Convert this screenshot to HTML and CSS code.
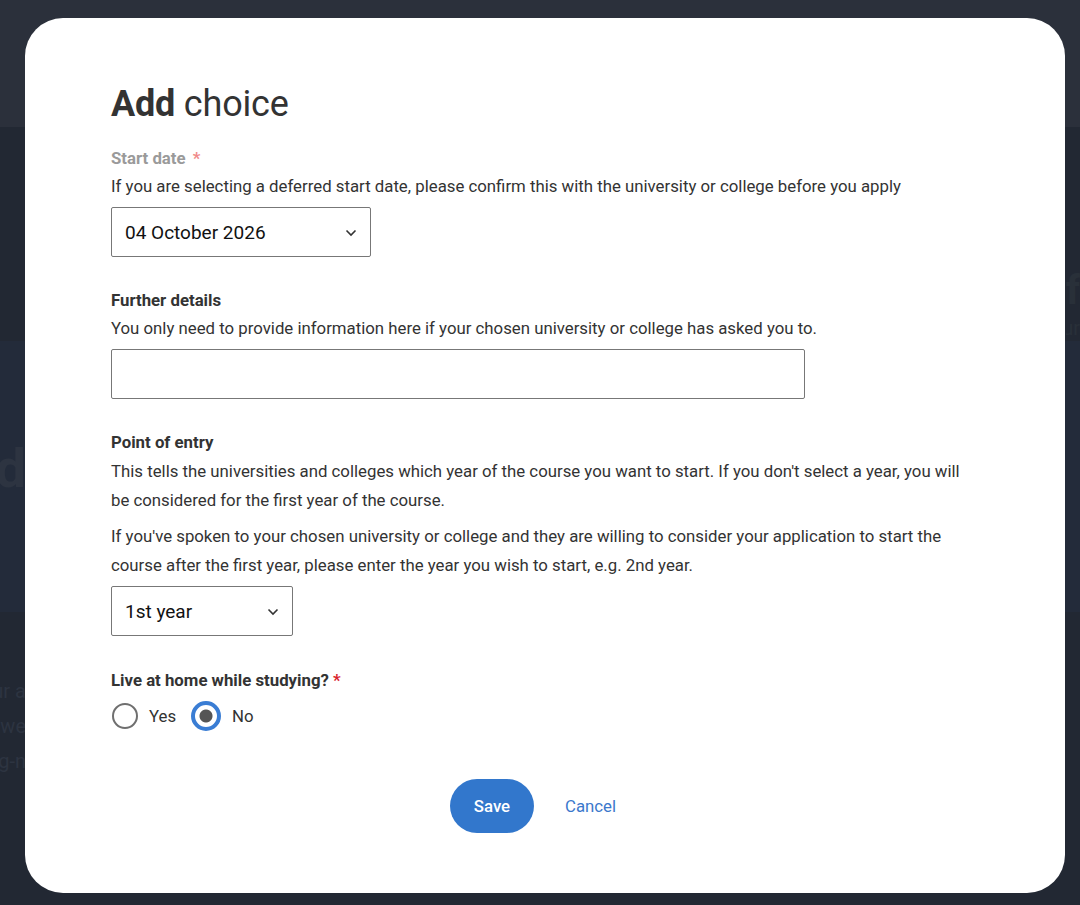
FILE: index.html
```html
<!DOCTYPE html>
<html lang="en">
<head>
<meta charset="utf-8">
<title>Add choice</title>
<link rel="stylesheet" href="styles.css">
</head>
<body>
<div class="page">
  <div class="band band-top"></div>
  <div class="band band-dark1"><div class="peek-right"><span class="big">f</span><span>ur</span></div></div>
  <div class="band band-blue"><div class="peek-left"><span class="big">d</span></div></div>
  <div class="band band-dark2"><div class="peek-left small"><span>ur a</span><span>we</span><span>g-n</span></div></div>
</div>

<div class="modal">
  <h1 class="title"><strong>Add</strong> choice</h1>

  <div class="field">
    <div class="label label-muted">Start date <span class="req-soft">*</span></div>
    <p class="hint">If you are selecting a deferred start date, please confirm this with the university or college before you apply</p>
    <div class="select select-date">
      <span>04 October 2026</span>
      <svg class="chev" width="12" height="8" viewBox="0 0 12 8"><path d="M1.5 1.5 L6 6 L10.5 1.5" fill="none" stroke="#333" stroke-width="1.6"/></svg>
    </div>
  </div>

  <div class="field">
    <div class="label">Further details</div>
    <p class="hint">You only need to provide information here if your chosen university or college has asked you to.</p>
    <div class="textbox"></div>
  </div>

  <div class="field field-entry">
    <div class="label">Point of entry</div>
    <p class="hint tall">This tells the universities and colleges which year of the course you want to start. If you don't select a year, you will be considered for the first year of the course.</p>
    <p class="hint tall second">If you've spoken to your chosen university or college and they are willing to consider your application to start the course after the first year, please enter the year you wish to start, e.g. 2nd year.</p>
    <div class="select select-year">
      <span>1st year</span>
      <svg class="chev" width="12" height="8" viewBox="0 0 12 8"><path d="M1.5 1.5 L6 6 L10.5 1.5" fill="none" stroke="#333" stroke-width="1.6"/></svg>
    </div>
  </div>

  <div class="field">
    <div class="label">Live at home while studying? <span class="req">*</span></div>
    <div class="radios">
      <label class="radio"><span class="dot"></span>Yes</label>
      <label class="radio checked"><span class="dot"></span>No</label>
    </div>
  </div>

  <div class="actions">
    <button class="btn-save">Save</button>
    <a class="btn-cancel">Cancel</a>
  </div>
</div>
</body>
</html>
```

FILE: styles.css
```css
* { box-sizing: border-box; }
html, body { margin: 0; padding: 0; }
body {
  width: 1080px;
  height: 905px;
  overflow: hidden;
  font-family: Roboto, "Liberation Sans", sans-serif;
  background: #222833;
}
.page { display: flex; flex-direction: column; height: 905px; }
.band { position: relative; }
.band-top { height: 127px; background: #2b303b; }
.band-dark1 { height: 214px; background: #222833; }
.band-blue { height: 271px; background: #232b3a; }
.band-dark2 { flex: 1; background: #222833; }

.peek-left {
  width: 26px;
  overflow: hidden;
  display: flex;
  flex-direction: column;
  align-items: flex-end;
  color: #2d3441;
  white-space: nowrap;
}
.band-blue .peek-left { padding-top: 98px; }
.peek-left .big { font-size: 54px; font-weight: 700; line-height: 60px; }
.peek-left.small { padding-top: 62px; font-size: 20px; line-height: 35px; }
.peek-right {
  width: 14px;
  overflow: hidden;
  display: flex;
  flex-direction: column;
  align-items: flex-end;
  padding-top: 142px;
  color: #293039;
  white-space: nowrap;
  position: absolute;
  right: 0;
  top: 0;
}
.peek-right .big { font-size: 40px; font-weight: 700; line-height: 44px; }
.peek-right span { font-size: 20px; line-height: 30px; }

.modal {
  position: absolute;
  left: 25px;
  top: 18px;
  width: 1040px;
  height: 875px;
  background: #fff;
  border-radius: 38px;
  padding: 64px 86px 0 86px;
  color: #333;
}
.title {
  margin: 0 0 22px 0;
  font-size: 36px;
  line-height: 44px;
  font-weight: 400;
  color: #333;
  letter-spacing: -0.2px;
}
.title strong { font-weight: 700; }

.field { margin-bottom: 33px; }
.field-entry { margin-bottom: 34px; }
.label {
  font-size: 16.8px;
  font-weight: 700;
  line-height: 20px;
  color: #333;
}
.label-muted { color: #9a9a9a; }
.req-soft { color: #f08a8a; margin-left: 3px; }
.req { color: #d9242b; }
.hint {
  margin: 7px 0 10px 0;
  font-size: 16.8px;
  line-height: 22px;
  color: #333;
}
.hint.tall { line-height: 29px; margin: 5px 0 7px 0; }
.hint.second { margin-top: 0; margin-bottom: 6px; }

.select {
  height: 50px;
  border: 1px solid #777;
  border-radius: 2px;
  display: flex;
  align-items: center;
  justify-content: space-between;
  padding: 0 13px 0 13px;
  font-size: 19px;
  color: #111;
}
.select-date { width: 260px; }
.select-year { width: 182px; }
.chev { margin-top: 1px; }
.textbox {
  width: 694px;
  height: 50px;
  border: 1px solid #777;
  border-radius: 2px;
}

.radios { display: flex; align-items: center; gap: 15px; margin-top: 11px; }
.radio {
  display: flex;
  align-items: center;
  font-size: 16.8px;
  color: #333;
  gap: 11px;
}
.radio .dot {
  width: 26px;
  height: 26px;
  border-radius: 50%;
  border: 2px solid #6f6f6f;
  display: inline-block;
  margin-left: 1px;
}
.radio.checked .dot {
  width: 30px;
  height: 30px;
  border: 4px solid #3a7dd4;
  background: radial-gradient(circle, #555 0 6px, #fff 7px);
  margin-left: 0;
  box-shadow: inset 0 0 0 1px #fff;
}

.actions {
  display: flex;
  align-items: center;
  justify-content: center;
  gap: 31px;
  margin-top: 48px;
  padding-right: 24px;
}
.btn-save {
  width: 84px;
  height: 54px;
  border: none;
  border-radius: 27px;
  background: #3277cc;
  color: #fff;
  font-family: Roboto, "Liberation Sans", sans-serif;
  font-size: 16.8px;
  font-weight: 500;
}
.btn-cancel {
  color: #3b78cc;
  font-size: 16.8px;
}
```
